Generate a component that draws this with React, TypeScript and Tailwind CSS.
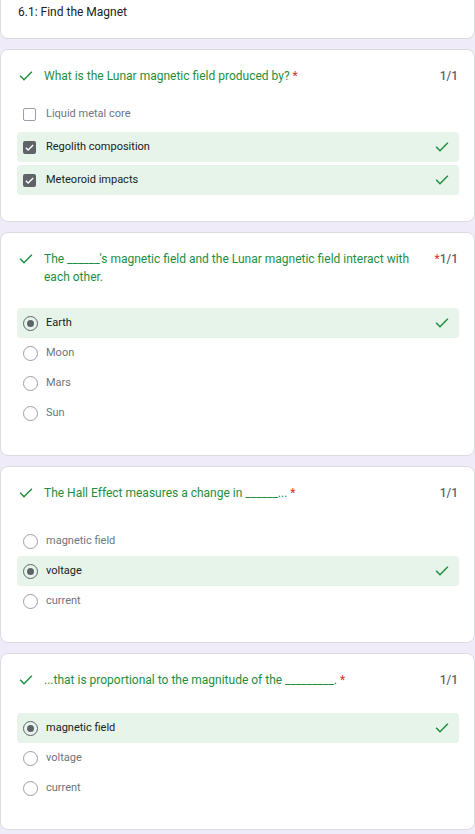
import React from "react";

type Opt = { label: string; picked?: boolean };

const Check = ({ className = "" }: { className?: string }) => (
  <svg viewBox="0 0 24 24" className={className} fill="none" stroke="#1e8e3e" strokeWidth="2.2" strokeLinecap="square">
    <path d="M4 12.5l5 5L20 6.5" />
  </svg>
);

function Box({ on }: { on?: boolean }) {
  if (on)
    return (
      <span className="w-[13px] h-[13px] rounded-[2px] bg-[#5f6368] flex items-center justify-center shrink-0">
        <svg viewBox="0 0 24 24" className="w-[11px] h-[11px]" fill="none" stroke="#fff" strokeWidth="3">
          <path d="M4 12.5l5 5L20 6.5" />
        </svg>
      </span>
    );
  return <span className="w-[13px] h-[13px] rounded-[2px] border-[1.5px] border-[#9aa0a6] shrink-0" />;
}

function Radio({ on }: { on?: boolean }) {
  return (
    <span
      className={`w-[15px] h-[15px] rounded-full border-[1.5px] flex items-center justify-center shrink-0 ${
        on ? "border-[#5f6368]" : "border-[#9aa0a6]"
      }`}
    >
      {on && <span className="w-[7px] h-[7px] rounded-full bg-[#5f6368]" />}
    </span>
  );
}

function Row({ opt, kind }: { opt: Opt; kind: "box" | "radio" }) {
  return (
    <div
      className={`h-[30px] flex items-center rounded-[4px] pl-[6px] pr-[9px] ${
        opt.picked ? "bg-[#e6f4ea]" : ""
      }`}
    >
      {kind === "box" ? <Box on={opt.picked} /> : <Radio on={opt.picked} />}
      <span
        className={`${kind === "box" ? "ml-[10px]" : "ml-[8px]"} text-[11px] flex-1 ${
          opt.picked ? "text-[#202124]" : "text-[#70757a]"
        }`}
      >
        {opt.label}
      </span>
      {opt.picked && <Check className="w-[16px] h-[16px]" />}
    </div>
  );
}

function Question({
  title,
  starInScore,
  options,
  kind,
  gap,
  pb = "pb-[26px]",
}: {
  title: string;
  starInScore?: boolean;
  options: Opt[];
  kind: "box" | "radio";
  gap: string;
  pb?: string;
}) {
  return (
    <div className={`bg-white border border-[#dadce0] rounded-[8px] pt-[17px] pl-[16px] pr-[15px] ${pb}`}>
      <div className="flex items-start">
        <Check className="w-[16px] h-[16px] mt-[1px] ml-[1px] shrink-0" />
        <p className="ml-[10px] flex-1 text-[12px] leading-[18px] text-[#1e8e3e] pr-[14px]">
          {title}
          {!starInScore && <span className="text-[#d93025]"> *</span>}
        </p>
        <span className="text-[12px] leading-[18px] text-[#5f6368] font-medium pr-[1px]">
          {starInScore && <span className="text-[#d93025] font-normal">*</span>}
          1/1
        </span>
      </div>
      <div className={`${gap} flex flex-col ${kind === "box" ? "gap-[3px]" : ""}`}>
        {options.map((o) => (
          <Row key={o.label} opt={o} kind={kind} />
        ))}
      </div>
    </div>
  );
}

export default function App() {
  return (
    <div
      className="min-h-screen bg-[#f0ebf8] flex flex-col gap-[10px] pb-[4px]"
      style={{ fontFamily: "Roboto, 'Liberation Sans', sans-serif" }}
    >
      <div className="bg-white border border-t-0 border-[#dadce0] rounded-b-[8px] h-[39px] pl-[17px] pt-[3px]">
        <p className="text-[12px] leading-[18px] text-[#202124]">6.1: Find the Magnet</p>
      </div>

      <Question
        title="What is the Lunar magnetic field produced by?"
        kind="box"
        gap="mt-[14px]"
        options={[
          { label: "Liquid metal core" },
          { label: "Regolith composition", picked: true },
          { label: "Meteoroid impacts", picked: true },
        ]}
      />

      <Question
        title="The ______'s magnetic field and the Lunar magnetic field interact with each other."
        starInScore
        kind="radio"
        gap="mt-[22px]"
        pb="pb-[27px]"
        options={[
          { label: "Earth", picked: true },
          { label: "Moon" },
          { label: "Mars" },
          { label: "Sun" },
        ]}
      />

      <Question
        title="The Hall Effect measures a change in ______..."
        kind="radio"
        gap="mt-[24px]"
        options={[
          { label: "magnetic field" },
          { label: "voltage", picked: true },
          { label: "current" },
        ]}
      />

      <Question
        title="...that is proportional to the magnitude of the _________."
        kind="radio"
        gap="mt-[24px]"
        options={[
          { label: "magnetic field", picked: true },
          { label: "voltage" },
          { label: "current" },
        ]}
      />
    </div>
  );
}
